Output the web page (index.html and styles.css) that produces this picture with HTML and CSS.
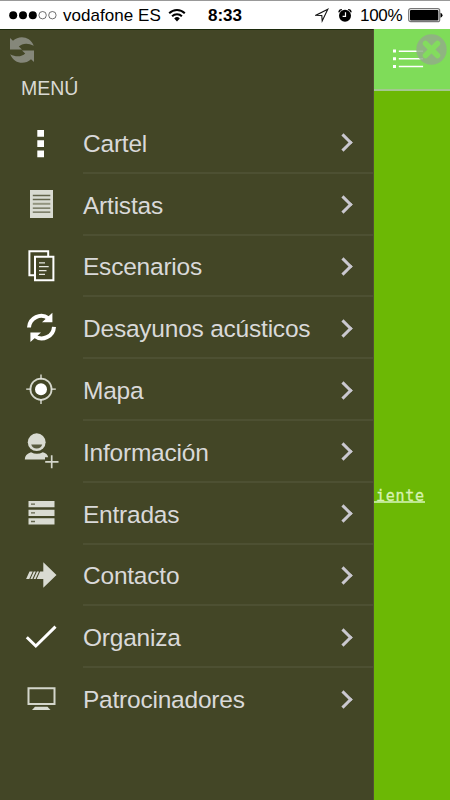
FILE: index.html
```html
<!DOCTYPE html>
<html lang="es">
<head>
    <meta charset="UTF-8">
    <meta name="viewport" content="width=device-width, initial-scale=1.0">
    <title>Menú</title>
    <link rel="stylesheet" href="styles.css">
</head>
<body>
    <header class="status-bar">
        <svg class="signal" width="49" height="28" viewBox="0 0 49 28">
            <circle cx="4.2" cy="14.2" r="4"/>
            <circle cx="14" cy="14.2" r="4"/>
            <circle cx="23.8" cy="14.2" r="4"/>
            <circle class="empty" cx="33.6" cy="14.2" r="3.7"/>
            <circle class="empty" cx="43.4" cy="14.2" r="3.7"/>
        </svg>
        <span class="carrier">vodafone ES</span>
        <svg class="wifi" width="18" height="28" viewBox="0 0 18 28">
            <path class="wave" d="M1.2 12.2a11 11 0 0 1 15.6 0M4.1 15.3a7 7 0 0 1 9.8 0"/>
            <path d="M6.2 17.4a4 4 0 0 1 5.6 0L9 20.4z"/>
        </svg>
        <span class="time">8:33</span>
        <svg class="location" width="14" height="28" viewBox="0 0 14 28">
            <path d="M12.8 8.2L1 14.2l5.8.3.4 5.5z"/>
        </svg>
        <svg class="alarm" width="14" height="28" viewBox="0 0 14 28">
            <circle cx="7" cy="14.7" r="6"/>
            <path class="bell" d="M.9 11.4a3 3 0 0 1 3-2.8M13.1 11.4a3 3 0 0 0-3-2.8"/>
            <path class="hands" d="M7.5 11.3v4H4.6"/>
        </svg>
        <span class="percent">100%</span>
        <svg class="battery" width="35" height="28" viewBox="0 0 35 28">
            <rect class="case" x=".7" y="7.7" width="31" height="13" rx="2"/>
            <rect x="2" y="9" width="28.4" height="10.4" rx="1"/>
            <path d="M32.5 11.7q2 .8 2 2.5t-2 2.5z"/>
        </svg>
    </header>

    <div class="screen">
        <nav class="menu">
            <svg class="reload" width="28" height="28" viewBox="0 0 28 28">
                <path d="M2 1v11.500h12l-3.200-3C14 6.300 20 5.500 25.800 8.800 22-1 11-2 5 3.800zM26 25V13.500H14l3.200 3C14 19.700 8 20.500 2.200 17.200 6 27 17 28 23 22.200z"/>
            </svg>
            <h1>MENÚ</h1>

            <ul>
                <li>
                    <svg class="icon" viewBox="0 0 83 61"><path class="white" d="M37.300 18H44v6.800h-6.700zM37.300 28.200H44V35h-6.700zM37.300 38.400H44v6.800h-6.700z"/></svg>
                    <a href="#">Cartel</a>
                </li>
                <li>
                    <svg class="icon" viewBox="0 0 83 61">
                        <path d="M30 17h23v28H30z"/>
                        <path class="dark" d="M32.800 22.500h17.500M32.800 26.500h17.500M32.800 35.100h17.500M32.800 39.200h17.500"/>
                        <path class="dark soft" d="M32.800 30.800h17.500"/>
                    </svg>
                    <a href="#">Artistas</a>
                </li>
                <li>
                    <svg class="icon" viewBox="0 0 83 61">
                        <path class="line w2" d="M34 40.300h-4.600V16.300h18.800v5M35 21.800h18.400v23.400H35z"/>
                        <path class="line thin" d="M39 27.800h6M39 31.700h9.700M39 35.600h7.500M39 39.300h6"/>
                    </svg>
                    <a href="#">Escenarios</a>
                </li>
                <li>
                    <svg class="icon" viewBox="0 0 83 61">
                        <path class="line w4" d="M29 30.500a12.300 12.300 0 0 1 19.500-9.200M54 29.800a12.300 12.300 0 0 1-19.500 9.200"/>
                        <path class="white" d="M52.400 15.800v9.400h-10.400zM30.400 45v-9.500h10.600z"/>
                    </svg>
                    <a href="#">Desayunos acústicos</a>
                </li>
                <li>
                    <svg class="icon" viewBox="0 0 83 61">
                        <circle class="line pale" cx="41" cy="30.200" r="10.600"/>
                        <circle class="white" cx="41" cy="30.200" r="6"/>
                        <path class="line thin" d="M41 15.500v5M41 40v5M26.200 30.200h5M50.800 30.200h5"/>
                    </svg>
                    <a href="#">Mapa</a>
                </li>
                <li>
                    <svg class="icon" viewBox="0 0 83 61">
                        <circle cx="36.700" cy="22.200" r="8.900"/>
                        <path class="hole" d="M31.200 24.500h11q-1.200 4-5.500 4t-5.500-4z"/>
                        <path d="M24.800 39.500q0-5.500 6.200-7.300 6 3 11.800 0 4.600 1.200 5.400 5h-3.200v2.300z"/>
                        <path class="line pale" d="M51.700 35.300v13M45.200 41.800h13.300"/>
                    </svg>
                    <a href="#">Información</a>
                </li>
                <li>
                    <svg class="icon" viewBox="0 0 83 61">
                        <path d="M28.500 19h26v6.300h-26zM28.500 27.700h26V34h-26zM28.500 36.300h26v6.300h-26z"/>
                        <path class="dark" d="M31 22.200h4M31 30.800h4M31 39.500h4"/>
                    </svg>
                    <a href="#">Entradas</a>
                </li>
                <li>
                    <svg class="icon" viewBox="0 0 83 61">
                        <path d="M43.300 18.300l13.200 12.700-13.200 12.700v-8.700h-6.600l3.400-7.600h3.200z"/>
                        <path d="M29.500 27.400h3.200l-3.400 7.600h-3.200zM33.800 27.400h2L32.400 35h-2zM37 27.400h2L35.600 35h-2z"/>
                    </svg>
                    <a href="#">Contacto</a>
                </li>
                <li>
                    <svg class="icon" viewBox="0 0 83 61"><path class="line w3" d="M26.800 31.200l9 8.800 19.700-19.400"/></svg>
                    <a href="#">Organiza</a>
                </li>
                <li>
                    <svg class="icon" viewBox="0 0 83 61">
                        <path class="line pale w2" d="M28.500 20.300h26v15.600h-26z"/>
                        <path d="M35 38.800h12.500l3 3.300H32z"/>
                    </svg>
                    <a href="#">Patrocinadores</a>
                </li>
            </ul>
        </nav>

        <main class="page">
            <div class="toolbar">
                <svg class="list-icon" width="31" height="20" viewBox="0 0 31 20">
                    <path d="M0 .5h3v3H0zM0 8.200h3v3H0zM0 15.900h3v3H0zM5.800 1.400h24.300v1.500H5.800zM5.800 9.100h24.300v1.500H5.800zM5.800 16.800h24.300v1.500H5.800z"/>
                </svg>
                <svg class="close" width="31" height="31" viewBox="0 0 31 31">
                    <circle cx="15.500" cy="15.500" r="15.200"/>
                    <path d="M9.500 9.500l12 12M21.500 9.500l-12 12"/>
                </svg>
            </div>
            <a class="next" href="#">iente</a>
        </main>
    </div>
</body>
</html>
```
FILE: styles.css
```css
* {
    margin: 0;
    padding: 0;
    box-sizing: border-box;
}

body {
    width: 450px;
    height: 800px;
    overflow: hidden;
    font-family: "Liberation Sans", Arial, sans-serif;
    background-color: #fff;
}

.status-bar {
    display: flex;
    align-items: center;
    height: 29px;
    padding-left: 9px;
    border-top: 1px solid #999;
    font-size: 17px;
    line-height: 28px;
    white-space: nowrap;
    color: #000;
}

.status-bar svg {
    flex: none;
}

.status-bar span {
    padding-top: 2px;
}

.signal .empty {
    fill: none;
    stroke: #333;
    stroke-width: 0.7;
}

.carrier {
    width: 98px;
    margin-left: 5px;
    letter-spacing: 0.05px;
}

.wifi {
    margin-left: 7px;
}

.wifi .wave {
    fill: none;
    stroke: #000;
    stroke-width: 2;
}

.time {
    width: 36px;
    margin-left: 22px;
    font-weight: bold;
}

.location {
    margin-left: 71px;
}

.location path {
    fill: none;
    stroke: #111;
    stroke-width: 1.1;
}

.alarm {
    margin-left: 9px;
}

.alarm .bell {
    fill: none;
    stroke: #000;
    stroke-width: 1.3;
}

.alarm .hands {
    fill: none;
    stroke: #fff;
    stroke-width: 1.2;
}

.percent {
    width: 43px;
    margin-left: 8px;
    letter-spacing: -0.3px;
}

.battery {
    margin-left: 5px;
}

.battery .case {
    fill: none;
    stroke: #777;
    stroke-width: 1.2;
}

.screen {
    display: flex;
    height: 771px;
}

.menu {
    width: 374px;
    padding-top: 7px;
    background-color: #434626;
    border-top: 1px solid #1c2a0c;
    border-right: 1px solid #505133;
}

.reload {
    display: block;
    margin-left: 8px;
    fill: #85877a;
}

.menu h1 {
    height: 47px;
    padding: 9px 0 0 21px;
    font-size: 19.5px;
    font-weight: normal;
    line-height: 28px;
    color: #d9d9d4;
}

.menu ul {
    list-style: none;
}

.menu li {
    display: flex;
    height: 61.8px;
}

.icon {
    flex: none;
    width: 83px;
    height: 61px;
    margin-top: -0.5px;
    fill: #d9dbd2;
}

.icon .white {
    fill: #fff;
}

.icon .hole {
    fill: #5a5c40;
}

.icon .dark {
    stroke: #62644b;
    stroke-width: 1.3;
}

.icon .soft {
    stroke: #92947f;
    stroke-width: 2;
}

.icon .line {
    fill: none;
    stroke: #fff;
    stroke-width: 1.7;
}

.icon .pale {
    stroke: #d4d6cb;
}

.icon .thin {
    stroke: #e6e7e0;
    stroke-width: 1.3;
}

.icon .w2 {
    stroke-width: 2;
}

.icon .w3 {
    stroke-width: 3;
}

.icon .w4 {
    stroke-width: 4;
}

.menu li a {
    display: flex;
    flex: 1;
    align-items: center;
    justify-content: space-between;
    padding: 4px 23px 0 0;
    border-bottom: 2px solid #4d5032;
    font-size: 24.5px;
    letter-spacing: -0.22px;
    color: #d9d9d9;
    text-decoration: none;
}

.menu li:last-child a {
    border-bottom-color: transparent;
}

.menu li a::after {
    content: "";
    box-sizing: border-box;
    width: 13px;
    height: 13px;
    margin-top: -2px;
    border-top: 3px solid #cac8cf;
    border-right: 3px solid #cac8cf;
    transform: rotate(45deg);
}

.page {
    flex: 1;
    background-color: #6cb805;
}

.toolbar {
    position: relative;
    height: 62px;
    padding: 20px 0 0 19px;
    background-color: #7fdc59;
    border-bottom: 2px solid #a5c791;
}

.list-icon {
    display: block;
    fill: #fff;
}

.close {
    position: absolute;
    top: 5px;
    right: 3px;
}

.close circle {
    fill: #92ad88;
    fill-opacity: 0.85;
}

.close path {
    fill: none;
    stroke: #83dc5e;
    stroke-width: 5.5;
    stroke-linecap: round;
}

.next {
    display: inline-block;
    height: 17px;
    margin-top: 395px;
    padding-left: 2px;
    border-bottom: 2px solid #bce78d;
    font-family: "DejaVu Sans Mono", monospace;
    font-size: 15px;
    letter-spacing: 0.7px;
    line-height: 20px;
    color: #d7f2b3;
    -webkit-text-stroke: 0.3px #d7f2b3;
    text-decoration: none;
}
```
